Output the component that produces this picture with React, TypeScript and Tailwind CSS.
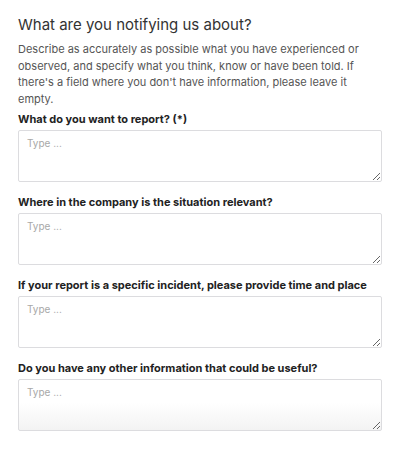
import React from "react";

const fields = [
  { label: "What do you want to report? (*)" },
  { label: "Where in the company is the situation relevant?" },
  { label: "If your report is a specific incident, please provide time and place" },
  { label: "Do you have any other information that could be useful?", fade: true },
];

export default function App() {
  return (
    <div
      className="w-[404px] h-[455px] bg-white pl-[18px] pr-[22px] pt-[15px] overflow-hidden"
      style={{ fontFamily: "Inter, 'Noto Sans', sans-serif" }}
    >
      <h2 className="text-[15px] leading-[20px] font-normal text-[#333333]">
        What are you notifying us about?
      </h2>
      <p className="mt-[6px] text-[11px] leading-[16.5px] text-[#555555]">
        Describe as accurately as possible what you have experienced or observed, and specify what you
        think, know or have been told. If there's a field where you don't have information, please leave
        it empty.
      </p>
      <div className="mt-[5px] flex flex-col gap-[13px]">
        {fields.map((f) => (
          <div key={f.label} className="flex flex-col gap-[4px]">
            <label className="text-[11px] leading-[14px] font-bold text-[#222222]">{f.label}</label>
            <textarea
              placeholder="Type ..."
              className={`block w-full h-[52px] border border-[#dcdcdf] rounded-[2px] px-[8px] pt-[5px] text-[10px] leading-[14px] text-[#333] placeholder:text-[#a8a8a8] outline-none ${
                f.fade
                  ? "bg-[linear-gradient(to_bottom,#ffffff_45%,#f3f3f3)]"
                  : "bg-white"
              }`}
            />
          </div>
        ))}
      </div>
    </div>
  );
}
